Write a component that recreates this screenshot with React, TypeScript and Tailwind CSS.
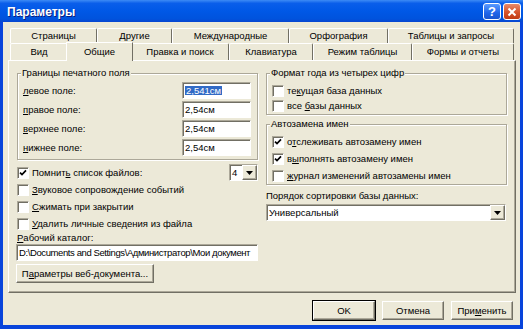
import type { ReactNode } from 'react';

// classic 3D edges used all over the dialog
const raised =
  'border border-t-white border-l-white border-r-[#716F64] border-b-[#716F64] shadow-[inset_-1px_-1px_0_#ACA899]';
const sunken =
  'border border-t-[#ACA899] border-l-[#ACA899] border-r-white border-b-white shadow-[inset_1px_1px_0_#716F64]';
const etched =
  'border border-[#ACA899] shadow-[inset_1px_1px_0_#fff,1px_1px_0_#fff]';

function Check({ checked, children }: { checked?: boolean; children: ReactNode }) {
  return (
    <div className="flex items-center h-full">
      <span className={`w-[12px] h-[12px] shrink-0 bg-white flex items-center justify-center ${sunken}`}>
        {checked && (
          <svg width="8" height="8" viewBox="0 0 8 8">
            <path d="M1 3.6 L3 5.6 L7 1.4" stroke="#000" strokeWidth="1.7" fill="none" />
          </svg>
        )}
      </span>
      <span className="ml-[3px] whitespace-nowrap">{children}</span>
    </div>
  );
}

function DropArrow() {
  return (
    <span className={`w-[15px] h-full shrink-0 bg-[#ECE9D8] flex items-center justify-center ${raised}`}>
      <svg width="7" height="4" viewBox="0 0 7 4">
        <path d="M0 0 H7 L3.5 4 Z" fill="#000" />
      </svg>
    </span>
  );
}

function Group({ title, children, className = '' }: { title: string; children: ReactNode; className?: string }) {
  return (
    <fieldset className={`${etched} ${className}`}>
      <legend className="ml-[3px] px-[1px] leading-[12px] bg-[#ECE9D8]">{title}</legend>
      {children}
    </fieldset>
  );
}

function Tab({ label, w, active }: { label: string; w: string; active?: boolean }) {
  if (active) {
    return (
      <div
        className={`${w} -mx-[2px] -mt-[1px] h-[19px] relative z-10 bg-[#ECE9D8] border-t border-l border-r border-t-white border-l-white border-r-[#716F64] flex items-center justify-center pb-[1px]`}
      >
        {label}
      </div>
    );
  }
  return (
    <div
      className={`${w} h-full bg-[#ECE9D8] border-t border-l border-r border-t-white border-l-white border-r-[#716F64] rounded-t-[2px] flex items-center justify-center whitespace-nowrap`}
    >
      {label}
    </div>
  );
}

function MarginRow({ label, value, selected }: { label: ReactNode; value: string; selected?: boolean }) {
  return (
    <div className="h-[17px] flex items-center justify-between">
      <span>{label}</span>
      <div className={`w-[69px] h-[17px] bg-white flex items-center pl-[2px] ${sunken}`}>
        {selected ? <span className="bg-[#316AC5] text-white px-[1px]">{value}</span> : <span>{value}</span>}
      </div>
    </div>
  );
}

function Button({ children, w, def }: { children: ReactNode; w: string; def?: boolean }) {
  return (
    <div
      className={`${w} h-[19px] bg-[#ECE9D8] flex items-center justify-center ${def ? 'outline outline-1 outline-black' : ''} ${raised}`}
    >
      {children}
    </div>
  );
}

export default function App() {
  return (
    <div className="w-[523px] h-[329px] flex flex-col bg-[#0844DB] font-['Liberation_Sans',sans-serif] text-[9.5px] text-black leading-none select-none">
      {/* Title bar */}
      <div className="h-[22px] shrink-0 flex items-center pl-[7px] pr-[2px] pt-[1px] bg-[linear-gradient(to_bottom,#3D8BF5_0%,#0A5EEA_15%,#0058E6_50%,#0053DD_85%,#0846D0_100%)]">
        <span className="text-white font-bold text-[12px] [text-shadow:1px_1px_0_#0A1E80]">Параметры</span>
        <div className="ml-auto flex gap-[2px]">
          <div className="w-[18px] h-[17px] rounded-[3px] border border-white bg-[linear-gradient(to_bottom,#5A9BFF,#1F64E8_60%,#1A55D0)] flex items-center justify-center text-white font-bold text-[13px]">
            ?
          </div>
          <div className="w-[18px] h-[17px] rounded-[3px] border border-white bg-[linear-gradient(to_bottom,#E88A6A,#D6532C_55%,#C13B14)] flex items-center justify-center">
            <svg width="10" height="10" viewBox="0 0 10 10">
              <path d="M1.5 1.5 L8.5 8.5 M8.5 1.5 L1.5 8.5" stroke="#fff" strokeWidth="2" />
            </svg>
          </div>
        </div>
      </div>

      {/* Client area */}
      <div className="flex-1 mx-[3px] mb-[4px] bg-[#ECE9D8] flex flex-col">
        {/* Tab rows */}
        <div className="pt-[6px] pl-[7px]">
          <div className="h-[15px] flex">
            <Tab label="Страницы" w="w-[87px]" />
            <Tab label="Другие" w="w-[75px]" />
            <Tab label="Международные" w="w-[117px]" />
            <Tab label="Орфография" w="w-[99px]" />
            <Tab label="Таблицы и запросы" w="w-[126px]" />
          </div>
          <div className="h-[17px] flex">
            <Tab label="Вид" w="w-[58px]" />
            <Tab label="Общие" w="w-[67px]" active />
            <Tab label="Правка и поиск" w="w-[98px]" />
            <Tab label="Клавиатура" w="w-[84px]" />
            <Tab label="Режим таблицы" w="w-[99px]" />
            <Tab label="Формы и отчеты" w="w-[102px]" />
          </div>
        </div>

        {/* Panel */}
        <div className={`ml-[5px] w-[508px] h-[233px] flex gap-[8px] pl-[8px] pt-[6px] ${raised}`}>
          {/* left column */}
          <div className="w-[241px] flex flex-col">
            <Group title="Границы печатного поля">
              <div className="pl-[5px] pr-[6px] pt-[3px] pb-[3px] flex flex-col gap-[2px]">
                <MarginRow label={<><u>л</u>евое поле:</>} value="2,541см" selected />
                <MarginRow label={<><u>п</u>равое поле:</>} value="2,54см" />
                <MarginRow label={<><u>в</u>ерхнее поле:</>} value="2,54см" />
                <MarginRow label={<><u>н</u>ижнее поле:</>} value="2,54см" />
              </div>
            </Group>

            <div className="mt-[4px] h-[17px] flex items-center justify-between">
              <Check checked>
                Помнит<u>ь</u> список файлов:
              </Check>
              <div className={`w-[29px] h-[17px] bg-white flex items-center pl-[2px] ${sunken}`}>
                <span className="flex-1">4</span>
                <DropArrow />
              </div>
            </div>
            <div className="h-[17px]">
              <Check>
                <u>З</u>вуковое сопровождение событий
              </Check>
            </div>
            <div className="h-[17px]">
              <Check>
                <u>С</u>жимать при закрытии
              </Check>
            </div>
            <div className="h-[17px]">
              <Check>
                <u>У</u>далить личные сведения из файла
              </Check>
            </div>
            <div className="h-[12px] flex items-center">
              <u>Р</u>абочий каталог:
            </div>
            <div className={`-ml-[1px] w-[242px] h-[17px] bg-white flex items-center pl-[2px] overflow-hidden whitespace-nowrap tracking-[-0.4px] ${sunken}`}>
              D:\Documents and Settings\Администратор\Мои документ
            </div>
            <div className="mt-[3px] -ml-[1px]">
              <Button w="w-[138px]">
                П<u>а</u>раметры веб-документа...
              </Button>
            </div>
          </div>

          {/* right column */}
          <div className="w-[241px] flex flex-col">
            <Group title="Формат года из четырех цифр">
              <div className="pl-[5px] pt-[4px] pb-[1px] flex flex-col">
                <div className="h-[15px]">
                  <Check>
                    те<u>к</u>ущая база данных
                  </Check>
                </div>
                <div className="h-[15px]">
                  <Check>
                    все <u>б</u>азы данных
                  </Check>
                </div>
              </div>
            </Group>

            <Group title="Автозамена имен" className="mt-[3px]">
              <div className="pl-[5px] pt-[3px] flex flex-col">
                <div className="h-[17px]">
                  <Check checked>
                    о<u>т</u>слеживать автозамену имен
                  </Check>
                </div>
                <div className="h-[17px]">
                  <Check checked>
                    в<u>ы</u>полнять автозамену имен
                  </Check>
                </div>
                <div className="h-[17px]">
                  <Check>
                    <u>ж</u>урнал изменений автозамены имен
                  </Check>
                </div>
              </div>
            </Group>

            <div className="mt-[5px] h-[12px] flex items-center">Порядок сортировки базы данных:</div>
            <div className={`mt-[2px] w-[240px] h-[17px] bg-white flex items-center pl-[2px] ${sunken}`}>
              <span className="flex-1">Универсальный</span>
              <DropArrow />
            </div>
          </div>
        </div>

        {/* Bottom buttons */}
        <div className="mt-[8px] flex justify-end gap-[7px] pr-[7px]">
          <Button w="w-[62px]" def>
            OK
          </Button>
          <Button w="w-[62px]">Отмена</Button>
          <Button w="w-[62px]">
            При<u>м</u>енить
          </Button>
        </div>
      </div>
    </div>
  );
}
